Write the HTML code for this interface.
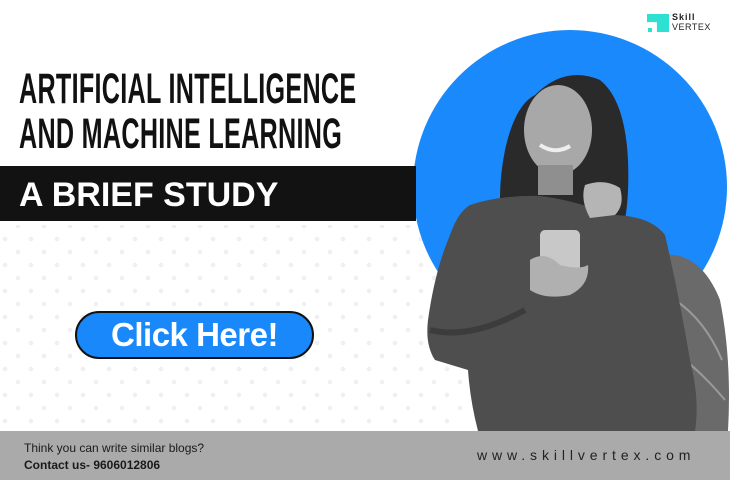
<!DOCTYPE html>
<html><head><meta charset="utf-8"><style>
*{margin:0;padding:0;box-sizing:border-box}
body{width:730px;height:480px;overflow:hidden;background:#fff;position:relative;font-family:"Liberation Sans",sans-serif}
.t{position:absolute;left:19px;font-weight:bold;color:#111;font-size:43px;line-height:1;transform-origin:0 0;transform:scaleX(0.585);white-space:nowrap;letter-spacing:0.5px}
.bar{position:absolute;left:0;top:166px;width:416px;height:55px;background:#121212}
.bs{position:absolute;left:19px;top:176px;color:#fff;font-weight:bold;font-size:34px;white-space:nowrap;transform-origin:0 0;transform:scaleX(1.0)}
.btn{position:absolute;left:75px;top:311px;width:239px;height:48px;border-radius:24px;background:#1888fb;border:2px solid #111;color:#fff;font-weight:bold;font-size:33px;text-align:center;line-height:43px;letter-spacing:-0.5px}
.foot{position:absolute;left:0;top:431px;width:730px;height:49px;background:#aaaaaa}
</style></head><body>
<svg width="730" height="480" style="position:absolute;left:0;top:0">
<defs><pattern id="d" width="26" height="26" patternUnits="userSpaceOnUse"><circle cx="5" cy="5" r="2.3" fill="#f0f0f0"/><circle cx="18" cy="18" r="2.3" fill="#f0f0f0"/></pattern></defs>
<rect x="0" y="225" width="470" height="206" fill="url(#d)"/>
<circle cx="570" cy="187" r="157" fill="#1989fb"/>
<path d="M660 255 Q700 250 720 300 Q732 360 728 431 L665 431 Z" fill="#6a6a6a"/>
<path d="M675 300 Q705 320 722 360 M672 350 Q700 370 725 400" stroke="#999" stroke-width="2" fill="none"/>
<path d="M535 95 Q565 65 600 80 Q625 100 628 160 Q630 210 620 240 L505 240 Q495 200 505 150 Q515 105 535 95 Z" fill="#2a2a2a"/>
<ellipse cx="558" cy="130" rx="34" ry="45" fill="#a8a8a8"/>
<path d="M540 145 Q555 155 570 146" stroke="#eee" stroke-width="4" fill="none"/>
<rect x="538" y="165" width="35" height="30" fill="#8f8f8f"/>
<path d="M470 205 Q500 195 540 196 Q575 200 610 215 Q650 215 665 235 Q680 300 690 360 Q700 400 695 431 L478 431 Q470 400 468 370 L435 360 Q425 345 428 320 Q435 270 450 235 Q458 212 470 205 Z" fill="#4e4e4e"/>
<path d="M430 330 Q470 340 525 310" stroke="#3c3c3c" stroke-width="6" fill="none"/>
<path d="M585 185 Q605 178 620 188 Q625 205 615 215 L590 218 Q580 200 585 185 Z" fill="#b5b5b5"/>
<rect x="540" y="230" width="40" height="45" rx="5" fill="#c8c8c8"/>
<path d="M530 260 Q545 250 560 265 Q580 270 588 265 Q590 285 570 295 Q545 300 530 290 Z" fill="#b0b0b0"/>
</svg>
<div class="t" style="top:68px">ARTIFICIAL INTELLIGENCE</div>
<div class="t" style="top:113px">AND MACHINE LEARNING</div>
<div class="bar"></div>
<div class="bs">A BRIEF STUDY</div>
<div class="btn">Click Here!</div>
<div style="position:absolute;left:647px;top:14px;width:22px;height:18px;background:#2de0d2;clip-path:polygon(0 0,100% 0,100% 100%,45% 100%,45% 45%,0 45%)"></div>
<div style="position:absolute;left:648px;top:28px;width:4px;height:4px;background:#2de0d2"></div>
<div style="position:absolute;left:672px;top:12px;font-size:9px;font-weight:bold;color:#222;letter-spacing:1px">Skill</div>
<div style="position:absolute;left:672px;top:22px;font-size:9px;color:#222;letter-spacing:0.5px">VERTEX</div>
<div class="foot"></div>
<div style="position:absolute;left:24px;top:441px;font-size:12px;color:#1a1a1a">Think you can write similar blogs?</div>
<div style="position:absolute;left:24px;top:458px;font-size:12px;font-weight:bold;color:#1a1a1a">Contact us- 9606012806</div>
<div style="position:absolute;left:477px;top:447px;font-size:14px;color:#222;letter-spacing:4.9px">www.skillvertex.com</div>
</body></html>
